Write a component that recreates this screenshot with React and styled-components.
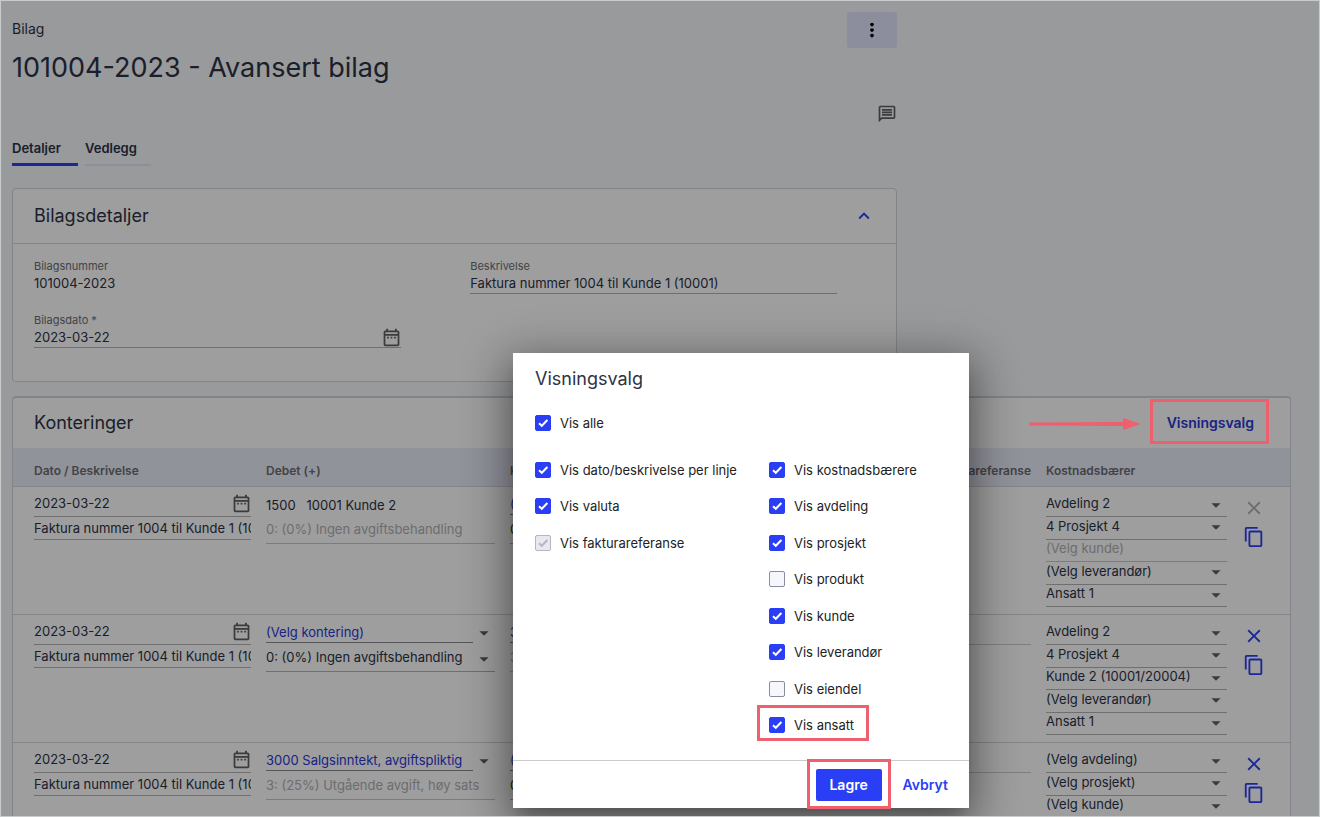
import {useState} from "react";
import styled, {createGlobalStyle, ThemeProvider} from "styled-components";
import {
    MdArrowDropDown,
    MdClose,
    MdContentCopy,
    MdKeyboardArrowUp,
    MdMoreVert,
    MdOutlineDateRange,
    MdOutlineMessage,
} from "react-icons/md";

const theme = {
    font: 'Inter, Roboto, "Liberation Sans", sans-serif',
    colors: {
        page: '#f5f8fa',
        text: '#2c3247',
        muted: '#6c6c72',
        disabled: '#b0b0b4',
        primary: '#2a3ff5',
        link: '#2b38d6',
        line: '#b4b4b4',
        softLine: '#d6d6da',
        mark: '#ee606d',
    },
}

const displayOptions = [
    {id: 'dato', label: 'Vis dato/beskrivelse per linje', checked: true},
    {id: 'valuta', label: 'Vis valuta', checked: true},
    {id: 'faktura', label: 'Vis fakturareferanse', checked: true, disabled: true},
]

const costOptions = [
    {id: 'kostnad', label: 'Vis kostnadsbærere', checked: true},
    {id: 'avdeling', label: 'Vis avdeling', checked: true},
    {id: 'prosjekt', label: 'Vis prosjekt', checked: true},
    {id: 'produkt', label: 'Vis produkt', checked: false},
    {id: 'kunde', label: 'Vis kunde', checked: true},
    {id: 'leverandor', label: 'Vis leverandør', checked: true},
    {id: 'eiendel', label: 'Vis eiendel', checked: false},
    {id: 'ansatt', label: 'Vis ansatt', checked: true, marked: true},
]

const postings = [
    {
        id: 1,
        locked: true,
        debit: {account: '1500   10001 Kunde 2', plain: true, vat: '0: (0%) Ingen avgiftsbehandling', vatDisabled: true},
        credit: {account: '(Velg kontering)', vat: '0: (0%) Ingen avgiftsbehandling'},
        costs: ['Avdeling 2', '4 Prosjekt 4', '(Velg kunde)', '(Velg leverandør)', 'Ansatt 1'],
        disabledCost: 2,
    },
    {
        id: 2,
        debit: {account: '(Velg kontering)', vat: '0: (0%) Ingen avgiftsbehandling'},
        credit: {account: '3000 Salgsinntekt', vat: '3: (25%) Utgående avgift', vatDisabled: true},
        costs: ['Avdeling 2', '4 Prosjekt 4', 'Kunde 2 (10001/20004)', '(Velg leverandør)', 'Ansatt 1'],
    },
    {
        id: 3,
        debit: {account: '3000 Salgsinntekt, avgiftspliktig', vat: '3: (25%) Utgående avgift, høy sats', vatDisabled: true},
        credit: {account: '(Velg kontering)', vat: '0: (0%) Ingen avgiftsbehandling'},
        costs: ['(Velg avdeling)', '(Velg prosjekt)', '(Velg kunde)', '(Velg leverandør)', '(Velg ansatt)'],
    },
]

function Dropdown({label, value, disabled}) {
    return (
        <>
            <Select aria-label={label} defaultValue={value} disabled={disabled}>
                <option>{value}</option>
            </Select>
            {disabled ? null : <MdArrowDropDown size={22}/>}
        </>
    );
}

function AccountCell({name, account, plain, vat, vatDisabled}) {
    return (
        <Cell>
            {plain ? (
                <PlainAccount>{account}</PlainAccount>
            ) : (
                <AccountRow>
                    <AccountField>
                        <Input aria-label={`${name} konto`} defaultValue={account}/>
                    </AccountField>
                    <MdArrowDropDown size={22}/>
                </AccountRow>
            )}
            <VatField $disabled={vatDisabled}>
                <Dropdown label={`${name} avgift`} value={vat} disabled={vatDisabled}/>
            </VatField>
        </Cell>
    );
}

function PostingRow({posting}) {
    return (
        <tr>
            <Cell>
                <DateField>
                    <Input aria-label="Dato" defaultValue="2023-03-22"/>
                    <CalendarButton type="button" aria-label="Velg dato">
                        <MdOutlineDateRange size={21}/>
                    </CalendarButton>
                </DateField>
                <TextField>
                    <Input aria-label="Beskrivelse" defaultValue="Faktura nummer 1004 til Kunde 1 (10001)"/>
                </TextField>
            </Cell>
            <AccountCell name="Debet" {...posting.debit}/>
            <AccountCell name="Kredit" {...posting.credit}/>
            <Cell/>
            <Cell>
                {posting.locked ? null : (
                    <ReferenceField>
                        <Input aria-label="Fakturareferanse"/>
                    </ReferenceField>
                )}
            </Cell>
            <Cell>
                <CostList>
                    {posting.costs.map((cost, i) => (
                        <CostField key={i} $disabled={posting.disabledCost === i}>
                            <Dropdown label="Kostnadsbærer" value={cost} disabled={posting.disabledCost === i}/>
                        </CostField>
                    ))}
                </CostList>
            </Cell>
            <Cell>
                <RowActions>
                    <IconButton type="button" $primary aria-label="Slett linje" disabled={posting.locked}>
                        <MdClose size={22}/>
                    </IconButton>
                    <IconButton type="button" $primary aria-label="Kopier linje">
                        <MdContentCopy size={22}/>
                    </IconButton>
                </RowActions>
            </Cell>
        </tr>
    );
}

function CheckOption({id, label, checked, disabled, marked, onToggle}) {
    return (
        <Option>
            <Check>
                <CheckInput id={id} type="checkbox" checked={checked} disabled={disabled} onChange={() => onToggle(id)}/>
                <CheckMark viewBox="0 0 16 16" aria-hidden="true">
                    <path d="M4 8.2l2.8 2.6L12.4 5"/>
                </CheckMark>
            </Check>
            <label htmlFor={id}>{label}</label>
            {marked ? <OptionFrame/> : null}
        </Option>
    );
}

function DisplayDialog() {
    const [options, setOptions] = useState([...displayOptions, ...costOptions])
    const [all, setAll] = useState(true)

    const handleToggle = (id) => {
        setOptions(options.map((o) => (o.id === id ? {...o, checked: !o.checked} : o)))
    }
    const left = options.slice(0, displayOptions.length)
    const right = options.slice(displayOptions.length)

    return (
        <Dialog role="dialog" aria-labelledby="dialog-title">
            <DialogBody>
                <SectionTitle id="dialog-title">Visningsvalg</SectionTitle>
                <CheckOption id="alle" label="Vis alle" checked={all} onToggle={() => setAll(!all)}/>
                <OptionColumns>
                    <OptionList>
                        {left.map((o) => <CheckOption key={o.id} {...o} onToggle={handleToggle}/>)}
                    </OptionList>
                    <OptionList>
                        {right.map((o) => <CheckOption key={o.id} {...o} onToggle={handleToggle}/>)}
                    </OptionList>
                </OptionColumns>
            </DialogBody>
            <DialogFooter>
                <SaveButton type="button">
                    Lagre
                    <SaveFrame/>
                </SaveButton>
                <TextButton type="button">Avbryt</TextButton>
            </DialogFooter>
        </Dialog>
    );
}

function App() {
    return (
        <ThemeProvider theme={theme}>
            <GlobalStyle/>
            <Page>
                <Columns>
                    <main>
                        <TopBar>
                            <div>
                                <Kicker>Bilag</Kicker>
                                <Title>101004-2023 - Avansert bilag</Title>
                            </div>
                            <MoreButton type="button" aria-label="Flere valg">
                                <MdMoreVert size={22}/>
                            </MoreButton>
                        </TopBar>
                        <CommentRow>
                            <IconButton type="button" aria-label="Kommentarer">
                                <MdOutlineMessage size={20}/>
                            </IconButton>
                        </CommentRow>
                        <Tabs>
                            <Tab href="#detaljer" $active>Detaljer</Tab>
                            <Tab href="#vedlegg">Vedlegg</Tab>
                        </Tabs>
                        <Card>
                            <CardHeader>
                                <SectionTitle>Bilagsdetaljer</SectionTitle>
                                <IconButton type="button" $primary aria-label="Skjul detaljer">
                                    <MdKeyboardArrowUp size={22}/>
                                </IconButton>
                            </CardHeader>
                            <DetailGrid>
                                <DetailField $readOnly>
                                    <label htmlFor="nummer">Bilagsnummer</label>
                                    <div>
                                        <Input id="nummer" readOnly value="101004-2023"/>
                                    </div>
                                </DetailField>
                                <DetailField>
                                    <label htmlFor="beskrivelse">Beskrivelse</label>
                                    <div>
                                        <Input id="beskrivelse" defaultValue="Faktura nummer 1004 til Kunde 1 (10001)"/>
                                    </div>
                                </DetailField>
                                <DetailField>
                                    <label htmlFor="dato-felt">Bilagsdato *</label>
                                    <div>
                                        <Input id="dato-felt" defaultValue="2023-03-22"/>
                                        <CalendarButton type="button" aria-label="Velg bilagsdato">
                                            <MdOutlineDateRange size={21}/>
                                        </CalendarButton>
                                    </div>
                                </DetailField>
                            </DetailGrid>
                        </Card>
                    </main>
                </Columns>
                <PostingCard>
                    <PostingHeader>
                        <SectionTitle>Konteringer</SectionTitle>
                        <ViewButton type="button">
                            Visningsvalg
                            <ViewFrame/>
                            <Arrow viewBox="0 0 112 14" aria-hidden="true">
                                <path d="M0 5.5L95 5v4L0 8.5z"/>
                                <path d="M94 1l18 6-18 6z"/>
                            </Arrow>
                        </ViewButton>
                    </PostingHeader>
                    <Table>
                        <colgroup>
                            <DateCol/>
                            <AccountCol/>
                            <AccountCol/>
                            <col/>
                            <ReferenceCol/>
                            <CostCol/>
                            <ActionCol/>
                        </colgroup>
                        <thead>
                            <tr>
                                <HeadCell>Dato / Beskrivelse</HeadCell>
                                <HeadCell>Debet (+)</HeadCell>
                                <HeadCell>Kredit (-)</HeadCell>
                                <HeadCell>Beløp</HeadCell>
                                <HeadCell $end>Fakturareferanse</HeadCell>
                                <HeadCell>Kostnadsbærer</HeadCell>
                                <HeadCell aria-label="Handlinger"/>
                            </tr>
                        </thead>
                        <tbody>
                            {postings.map((p) => <PostingRow key={p.id} posting={p}/>)}
                        </tbody>
                    </Table>
                </PostingCard>
                <Backdrop/>
                <DisplayDialog/>
            </Page>
        </ThemeProvider>
    );
}

export default App;

const GlobalStyle = createGlobalStyle`
    * {
        box-sizing: border-box;
    }
    body {
        margin: 0;
        font-family: ${({theme}) => theme.font};
        font-size: 13px;
        line-height: 16px;
        color: ${({theme}) => theme.colors.text};
    }
    h1, h2, p {
        margin: 0;
        font-weight: 400;
    }
    button, input, select {
        font: inherit;
        color: inherit;
        padding: 0;
        border: 0;
        background: none;
    }
    svg {
        display: block;
        flex: none;
    }
`

const Page = styled.div`
    position: relative;
    height: 100vh;
    overflow: hidden;
    padding: 11px 28px 0 11px;
    border: 1px solid #c9cccd;
    background: ${({theme}) => theme.colors.page};
`

const Columns = styled.div`
    display: grid;
    grid-template-columns: minmax(0, 9fr) minmax(0, 4fr);
`

const TopBar = styled.div`
    display: flex;
    justify-content: space-between;
    align-items: flex-start;
`

const Kicker = styled.p`
    padding-top: 9px;
    font-size: 14px;
`

const Title = styled.h1`
    padding-top: 14px;
    font-size: 27px;
    line-height: 34px;
`

const MoreButton = styled.button`
    display: flex;
    align-items: center;
    justify-content: center;
    width: 50px;
    height: 36px;
    border-radius: 3px;
    background: #e3e5ff;
    color: black;
`

const CommentRow = styled.div`
    display: flex;
    justify-content: flex-end;
    padding-top: 19px;
`

const IconButton = styled.button`
    flex: none;
    color: ${({theme, $primary}) => ($primary ? theme.colors.primary : '#606064')};
    &:disabled{
        color: ${({theme}) => theme.colors.disabled};
    }
`

const CalendarButton = styled(IconButton)`
    margin-right: -1px;
`

const Tabs = styled.nav`
    display: flex;
    gap: 7px;
    padding-top: 16px;
`

const Tab = styled.a`
    display: flex;
    width: 66px;
    height: 26px;
    border-bottom: ${({theme, $active}) => ($active ? `3px solid ${theme.colors.primary}` : '2px solid #e3e5ff')};
    color: ${({theme}) => theme.colors.text};
    font-weight: 600;
    text-decoration: none;
`

const Card = styled.section`
    margin-top: 22px;
    border: 1px solid #d3d5db;
    border-radius: 4px;
    background: white;
`

const CardHeader = styled.div`
    display: flex;
    justify-content: space-between;
    align-items: center;
    height: 55px;
    padding: 0 21px;
    border-bottom: 1px solid ${({theme}) => theme.colors.softLine};
`

const SectionTitle = styled.h2`
    font-size: 18px;
    line-height: 22px;
`

const DetailGrid = styled.div`
    display: grid;
    grid-template-columns: 1fr 1fr;
    gap: 19px 69px;
    padding: 15px 59px 33px 21px;
`

const DetailField = styled.div`
    label{
        display: block;
        color: ${({theme}) => theme.colors.muted};
        font-size: 11px;
        line-height: 14px;
    }
    div{
        display: flex;
        align-items: center;
        height: 21px;
        border-bottom: 1px solid ${({theme, $readOnly}) => ($readOnly ? 'transparent' : theme.colors.line)};
    }
`

const Input = styled.input`
    flex: 1;
    min-width: 0;
    width: 100%;
    outline: none;
`

const PostingCard = styled(Card)`
    margin-top: 14px;
    border-top-width: 2px;
`

const PostingHeader = styled.div`
    display: flex;
    justify-content: space-between;
    align-items: center;
    height: 50px;
    padding: 0 36px 0 21px;
`

const ViewButton = styled.button`
    position: relative;
    color: ${({theme}) => theme.colors.link};
    font-size: 14px;
    font-weight: 600;
`

/* Red frames and arrow lie above the backdrop */
const Frame = styled.span`
    position: absolute;
    z-index: 3;
    border: 3px solid ${({theme}) => theme.colors.mark};
    pointer-events: none;
`

const ViewFrame = styled(Frame)`
    inset: -16px -15px -13px -17px;
`

const Arrow = styled.svg`
    position: absolute;
    z-index: 3;
    top: 2px;
    right: calc(100% + 26px);
    width: 112px;
    height: 14px;
    fill: ${({theme}) => theme.colors.mark};
`

const Table = styled.table`
    width: 100%;
    table-layout: fixed;
    border-collapse: collapse;
`

const DateCol = styled.col`
    width: 245px;
`
const AccountCol = styled.col`
    width: 244px;
`
const ReferenceCol = styled.col`
    width: 124px;
`
const CostCol = styled.col`
    width: 196px;
`
const ActionCol = styled.col`
    width: 56px;
`

const HeadCell = styled.th`
    height: 38px;
    padding: 8px 7px 0 8px;
    border-bottom: 1px solid ${({theme}) => theme.colors.softLine};
    background: #ebeefa;
    color: ${({theme}) => theme.colors.muted};
    font-size: 12px;
    font-weight: 600;
    text-align: ${({$end}) => ($end ? 'right' : 'left')};
    white-space: nowrap;
    &:first-child{
        padding-left: 21px;
    }
`

const Cell = styled.td`
    height: 128px;
    padding: 4px 7px 0 8px;
    border-bottom: 1px solid ${({theme}) => theme.colors.softLine};
    vertical-align: top;
    &:first-child{
        padding-left: 21px;
    }
    svg{
        color: #606064;
    }
    button svg{
        color: inherit;
    }
`

const Field = styled.div`
    display: flex;
    align-items: center;
    border-bottom: 1px solid ${({theme, $disabled}) => ($disabled ? '#c8c8cc' : theme.colors.line)};
    color: ${({theme, $disabled}) => ($disabled ? theme.colors.disabled : theme.colors.text)};
`

const DateField = styled(Field)`
    height: 26px;
`

const TextField = styled(Field)`
    height: 23px;
`

const ReferenceField = styled(Field)`
    height: 26px;
    border-color: #cdcdcd;
`

const AccountRow = styled.div`
    display: flex;
    align-items: center;
    height: 20px;
    margin-top: 4px;
`

const AccountField = styled(Field)`
    flex: 1;
    height: 20px;
    border-color: #8c8c90;
    color: ${({theme}) => theme.colors.link};
`

const PlainAccount = styled.div`
    height: 24px;
    padding-top: 6px;
    white-space: pre;
`

const VatField = styled(Field)`
    height: 29px;
    padding-top: 4px;
`

const CostList = styled.div`
    padding-top: 4px;
`

const CostField = styled(Field)`
    height: 22px;
    padding-bottom: 1px;
    &:nth-child(even){
        height: 23px;
    }
`

const Select = styled.select`
    flex: 1;
    min-width: 0;
    padding-bottom: 3px;
    appearance: none;
    outline: none;
    &:disabled{
        opacity: 1;
    }
`

const RowActions = styled.div`
    display: flex;
    flex-direction: column;
    gap: 7px;
    padding: 6px 1px 0;
`

const Backdrop = styled.div`
    position: absolute;
    inset: 0;
    z-index: 2;
    background: rgba(0, 0, 0, 0.38);
`

const Dialog = styled.div`
    position: absolute;
    z-index: 4;
    top: 352px;
    left: 512px;
    width: 456px;
    background: white;
    box-shadow: 0 11px 15px -7px rgba(0, 0, 0, 0.2), 0 14px 38px 3px rgba(0, 0, 0, 0.3), 0 9px 46px 8px rgba(0, 0, 0, 0.2);
`

const DialogBody = styled.div`
    padding: 15px 22px 26px;
    color: #222;
    h2{
        margin-bottom: 25px;
        color: ${({theme}) => theme.colors.text};
    }
`

const OptionColumns = styled.div`
    display: grid;
    grid-template-columns: 234px 1fr;
    padding-top: 31px;
`

const OptionList = styled.div`
    display: grid;
    grid-auto-rows: 36px 37px;
    align-content: start;
    &:last-child{
        margin-bottom: -20px;
    }
`

const Option = styled.div`
    position: relative;
    display: flex;
    align-items: center;
    gap: 9px;
    height: 16px;
    justify-self: start;
`

const Check = styled.span`
    position: relative;
    flex: none;
    width: 16px;
    height: 16px;
`

const CheckInput = styled.input`
    display: block;
    width: 16px;
    height: 16px;
    margin: 0;
    appearance: none;
    border: 1px solid #8a8d9c;
    border-radius: 2px;
    background: #f6f7fd;
    &:checked{
        border-color: ${({theme}) => theme.colors.primary};
        background: ${({theme}) => theme.colors.primary};
    }
    &:disabled{
        border-color: #b5b7c0;
        background: #e8e9ee;
    }
`

const CheckMark = styled.svg`
    position: absolute;
    inset: 0;
    fill: none;
    stroke: white;
    stroke-width: 2;
    pointer-events: none;
    input:not(:checked) + &{
        display: none;
    }
    input:disabled + &{
        stroke: #b5b7c0;
    }
`

const OptionFrame = styled(Frame)`
    inset: -12px -15px -8px -12px;
`

const DialogFooter = styled.div`
    display: flex;
    justify-content: flex-end;
    align-items: center;
    gap: 21px;
    height: 48px;
    padding-right: 21px;
    border-top: 1px solid #cbcbcb;
`

const SaveButton = styled.button`
    position: relative;
    width: 66px;
    height: 32px;
    border-radius: 2px;
    background: ${({theme}) => theme.colors.primary};
    color: white;
    font-size: 14px;
    font-weight: 600;
`

const SaveFrame = styled(Frame)`
    inset: -10px -9px -8px;
`

const TextButton = styled.button`
    color: ${({theme}) => theme.colors.primary};
    font-size: 14px;
    font-weight: 600;
`
